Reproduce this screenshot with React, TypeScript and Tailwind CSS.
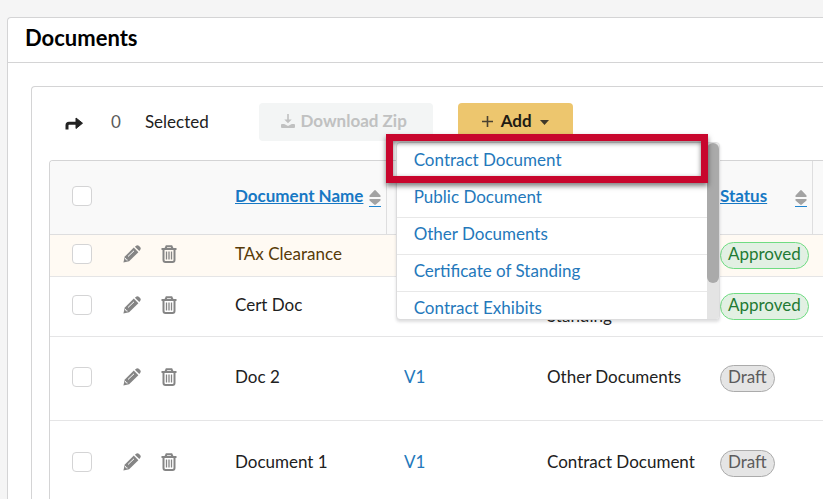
import { useState } from "react";

type Status = "Approved" | "Draft";

interface DocumentRow {
  id: number;
  name: string;
  version?: string;
  type: string;
  status: Status;
  rowClass: string;
}

const documents: DocumentRow[] = [
  { id: 1, name: "TAx Clearance", type: "", status: "Approved", rowClass: "h-[42px] bg-[#fffaf3] text-[#573a08]" },
  { id: 2, name: "Cert Doc", type: "Certificate of Standing", status: "Approved", rowClass: "h-[60px]" },
  { id: 3, name: "Doc 2", version: "V1", type: "Other Documents", status: "Draft", rowClass: "h-[84px]" },
  { id: 4, name: "Document 1", version: "V1", type: "Contract Document", status: "Draft", rowClass: "h-[85px]" },
];

const addOptions = [
  "Contract Document",
  "Public Document",
  "Other Documents",
  "Certificate of Standing",
  "Contract Exhibits",
];

const ForwardIcon = () => (
  <svg width="18" height="14" viewBox="0 0 18 14" aria-hidden="true">
    <path d="M2 12.5V8.2Q2 6.2 4 6.2H12" fill="none" stroke="#222" strokeWidth="3" />
    <path d="M11 1l6.5 5.2L11 11.5z" fill="#222" stroke="#222" strokeWidth="1" strokeLinejoin="round" />
  </svg>
);

const PencilIcon = () => (
  <svg width="18" height="18" viewBox="0 0 18 18" aria-hidden="true">
    <path d="M10.8 2.600l4.600 4.600-9.300 9.100L0.400 17.600l1.400-6z" fill="currentColor" />
    <path d="M11.900 1.700l.9-.8q1.500-1.300 3-.1l1.300 1.300q1.300 1.500 0 3l-.8.900z" fill="currentColor" />
    <path d="M5 11.500L11 5.800" stroke="white" strokeWidth="1" />
    <path d="M2.400 13l.5 1.600 1.700.5" fill="none" stroke="white" strokeWidth="0.900" />
  </svg>
);

const TrashIcon = () => (
  <svg width="16" height="18" viewBox="0 0 16 18" fill="none" stroke="currentColor" aria-hidden="true">
    <path d="M0.500 4h15" strokeWidth="2" />
    <path d="M4.500 3.500L5.500 1.300h5L11.500 3.500" strokeWidth="2" />
    <path d="M2.500 4.500V15q0 2 2 2h7q2 0 2-2V4.500" strokeWidth="2" />
    <path d="M5.500 6.500v8M8 6.500v8M10.500 6.500v8" strokeWidth="1.300" />
  </svg>
);

const SortIcon = () => (
  <svg width="12" height="17" viewBox="0 0 12 17" fill="#a3a3a3" aria-hidden="true">
    <path d="M0.500 5.500L5.200.4q.8-.7 1.600 0L11.500 5.500V7H.5zM.5 9h11v1.500L6.800 14.600q-.8.700-1.600 0L.5 10.500z" />
    <path d="M0 16.500h12" stroke="#2185d0" />
  </svg>
);

const DownloadIcon = () => (
  <svg width="14" height="14" viewBox="0 0 14 14" fill="#c0c1c1" aria-hidden="true">
    <path d="M6.200 0h1.600v5.500h2.900L7 9.300 3.300 5.500h2.900z" />
    <path d="M0 11q0-1 1-1h2.200L7 12l3.800-2H13q1 0 1 1V13q0 1-1 1H1q-1 0-1-1z" />
  </svg>
);

const CheckBox = ({ label }: { label: string }) => (
  <input
    type="checkbox"
    aria-label={label}
    className="block size-5 appearance-none rounded border border-[#d4d4d5] bg-white checked:bg-[#2185d0]"
  />
);

const StatusBadge = ({ status }: { status: Status }) => (
  <span
    className={
      status === "Approved"
        ? "inline-block rounded-full border border-[#6fdc82] bg-[#e2f0e3] px-[7px] pb-[3px] leading-[22px] text-[#1f7a33]"
        : "inline-block rounded-full border border-[#ababab] bg-[#e5e5e5] px-[7px] pb-[3px] leading-[22px] text-[#5c5c5c]"
    }
  >
    {status}
  </span>
);

const AddMenu = () => {
  const [open, setOpen] = useState(true);

  return (
    <div className="relative ml-[25px]">
      <button
        type="button"
        aria-expanded={open}
        onClick={() => setOpen(!open)}
        className="flex h-[38px] w-[115px] items-center justify-center rounded bg-[#edc66e] pb-0.5 font-bold text-[#1f1c14]"
      >
        <svg width="11" height="11" viewBox="0 0 11 11" className="mt-0.5 mr-2" aria-hidden="true">
          <path d="M5.500 0v11M0 5.500h11" stroke="#4a4130" strokeWidth="1.600" />
        </svg>
        Add
        <svg width="9" height="5" viewBox="0 0 9 5" className="mt-1 ml-2" aria-hidden="true">
          <path d="M0 0h9L4.500 5z" fill="#3f3829" />
        </svg>
      </button>
      {open && (
        <div className="absolute top-[39px] -left-[62px] z-10 w-[324px]">
          <div className="flex h-[178px] overflow-hidden rounded border border-[#dcdcdd] bg-white shadow-[0_2px_3px_rgba(34,36,38,0.15)]">
            <ul className="flex-1 pt-px">
              {addOptions.map((option) => (
                <li key={option} className="border-b border-[#e8e8e8]">
                  <a href="#" className="block h-9 pl-[17px] leading-8 text-[#2478bb]">
                    {option}
                  </a>
                </li>
              ))}
            </ul>
            <div className="w-3 bg-[#e4e4e4]">
              <div className="h-[140px] rounded-md bg-[#aaaaaa]" />
            </div>
          </div>
          {/* callout around the first option */}
          <div className="pointer-events-none absolute -top-2 -left-2.5 h-[49px] w-[322px] border-[7px] border-[#c8062d] shadow-[0_3px_5px_rgba(0,0,0,0.5),inset_0_2px_5px_rgba(0,0,0,0.5)]" />
        </div>
      )}
    </div>
  );
};

const headerCell = "border-b border-[#dededf] bg-[#f9f9f9] pb-[3px] text-left align-middle";
const bodyCell = "border-b border-[#e5e5e6] align-middle";

const App = () => {
  return (
    <div className="min-h-screen overflow-hidden bg-[#f5f5f5] pt-[17px] pl-[7px] font-[Lato,sans-serif] text-[17px] leading-5 text-[#212121]">
      <main className="rounded-tl border-t border-l border-[#d4d4d5] bg-white">
        <h1 className="h-[45px] border-b border-[#d4d4d5] pl-[17px] text-[22px] leading-10 font-bold text-black">
          Documents
        </h1>
        <section className="mt-[23px] ml-[23px] rounded-tl border-t border-l border-[#d4d4d5] pt-4 pl-[17px]">
          <div className="mb-5 flex h-[37px] items-center">
            <button type="button" aria-label="Forward" className="mt-1 ml-4">
              <ForwardIcon />
            </button>
            <span className="ml-7 text-[#5a5a5a]">0</span>
            <span className="ml-6">Selected</span>
            <button
              type="button"
              disabled
              className="ml-[50px] flex h-[38px] w-[174px] items-center justify-center gap-1.5 rounded bg-[#f3f5f5] pr-1 pb-0.5 font-bold text-[#c0c1c1]"
            >
              <DownloadIcon />
              Download Zip
            </button>
            <AddMenu />
          </div>
          <div className="overflow-hidden rounded-tl border-t border-l border-[#d4d4d5]">
            <table className="w-full table-fixed border-separate border-spacing-0">
              <colgroup>
                <col className="w-16" />
                <col className="w-28" />
                <col className="w-[161px]" />
                <col className="w-[151px]" />
                <col className="w-[173px]" />
                <col className="w-[102px]" />
                <col />
              </colgroup>
              <thead>
                <tr className="h-[74px] text-[#1778c4]">
                  <th className={`${headerCell} pl-[22px]`}>
                    <CheckBox label="Select all" />
                  </th>
                  <th className={headerCell} />
                  <th className={`${headerCell} border-r pr-[5px] pl-[9px]`}>
                    <a href="#" className="flex items-center justify-between">
                      <span className="underline">Document Name</span>
                      <span className="pt-1">
                        <SortIcon />
                      </span>
                    </a>
                  </th>
                  <th className={headerCell} />
                  <th className={headerCell} />
                  <th className={`${headerCell} border-r pr-[5px] pl-[9px]`}>
                    <a href="#" className="flex items-center justify-between">
                      <span className="underline">Status</span>
                      <span className="pt-1">
                        <SortIcon />
                      </span>
                    </a>
                  </th>
                  <th className={headerCell} />
                </tr>
              </thead>
              <tbody>
                {documents.map((doc) => (
                  <tr key={doc.id} className={doc.rowClass}>
                    <td className={`${bodyCell} pb-[3px] pl-[22px]`}>
                      <CheckBox label={`Select ${doc.name}`} />
                    </td>
                    <td className={`${bodyCell} pb-[3px]`}>
                      <div className="flex gap-5 pl-[9px] text-[#858585]">
                        <button type="button" aria-label={`Edit ${doc.name}`}>
                          <PencilIcon />
                        </button>
                        <button type="button" aria-label={`Delete ${doc.name}`}>
                          <TrashIcon />
                        </button>
                      </div>
                    </td>
                    <td className={`${bodyCell} pb-[3px] pl-[9px]`}>{doc.name}</td>
                    <td className={`${bodyCell} pb-[3px] pl-[17px]`}>
                      {doc.version && (
                        <a href="#" className="text-[#2478bb]">
                          {doc.version}
                        </a>
                      )}
                    </td>
                    <td className={`${bodyCell} pr-4 pb-[3px] pl-[9px] leading-[22px]`}>{doc.type}</td>
                    <td className={`${bodyCell} pl-[9px]`}>
                      <StatusBadge status={doc.status} />
                    </td>
                    <td className={bodyCell} />
                  </tr>
                ))}
              </tbody>
            </table>
          </div>
        </section>
      </main>
    </div>
  );
};

export default App;
